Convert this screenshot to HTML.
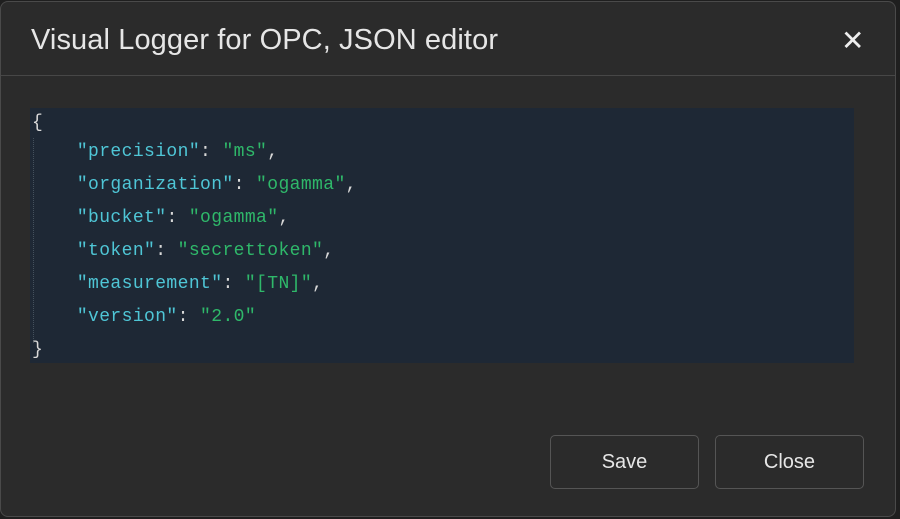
<!DOCTYPE html>
<html><head><style>
html,body{margin:0;padding:0;background:#1f1f1f;width:900px;height:519px;overflow:hidden}
.dlg{position:absolute;left:0;top:1px;width:896px;height:516px;background:#2b2b2b;border:1px solid #4a4a4a;border-radius:8px;box-sizing:border-box}
.title{position:absolute;left:30px;top:22px;font:29px "Liberation Sans",sans-serif;color:#e6e6e6;letter-spacing:0.1px}
.x{position:absolute;left:840px;top:22px;font:28px "Liberation Sans",sans-serif;color:#eee}
.sep{position:absolute;left:0;top:73px;width:100%;height:1px;background:#474747}
.ed{position:absolute;left:29px;top:106px;width:824px;height:255px;background:#1e2835}
.ed pre{margin:0;position:absolute;left:2px;font:18px "Liberation Mono",monospace;letter-spacing:0.4px;line-height:33px;color:#d8d8d8}
.guide{position:absolute;left:3px;top:30px;height:205px;border-left:1px dotted #44505c}
.k{color:#4fc6d6}.s{color:#2fb86a}
.btn{position:absolute;top:433px;width:149px;height:54px;border:1px solid #555;border-radius:5px;box-sizing:border-box;color:#e6e6e6;font:20px "Liberation Sans",sans-serif;text-align:center;line-height:52px}
</style></head><body>
<div class="dlg">
<div class="title">Visual Logger for OPC, JSON editor</div>
<div class="x">✕</div>
<div class="sep"></div>
<div class="ed"><div class="guide"></div><pre style="top:-1px">{</pre><pre style="top:28px">    <span class="k">"precision"</span>: <span class="s">"ms"</span>,
    <span class="k">"organization"</span>: <span class="s">"ogamma"</span>,
    <span class="k">"bucket"</span>: <span class="s">"ogamma"</span>,
    <span class="k">"token"</span>: <span class="s">"secrettoken"</span>,
    <span class="k">"measurement"</span>: <span class="s">"[TN]"</span>,
    <span class="k">"version"</span>: <span class="s">"2.0"</span>
}</pre></div>
<div class="btn" style="left:549px">Save</div>
<div class="btn" style="left:714px">Close</div>
</div>
</body></html>
